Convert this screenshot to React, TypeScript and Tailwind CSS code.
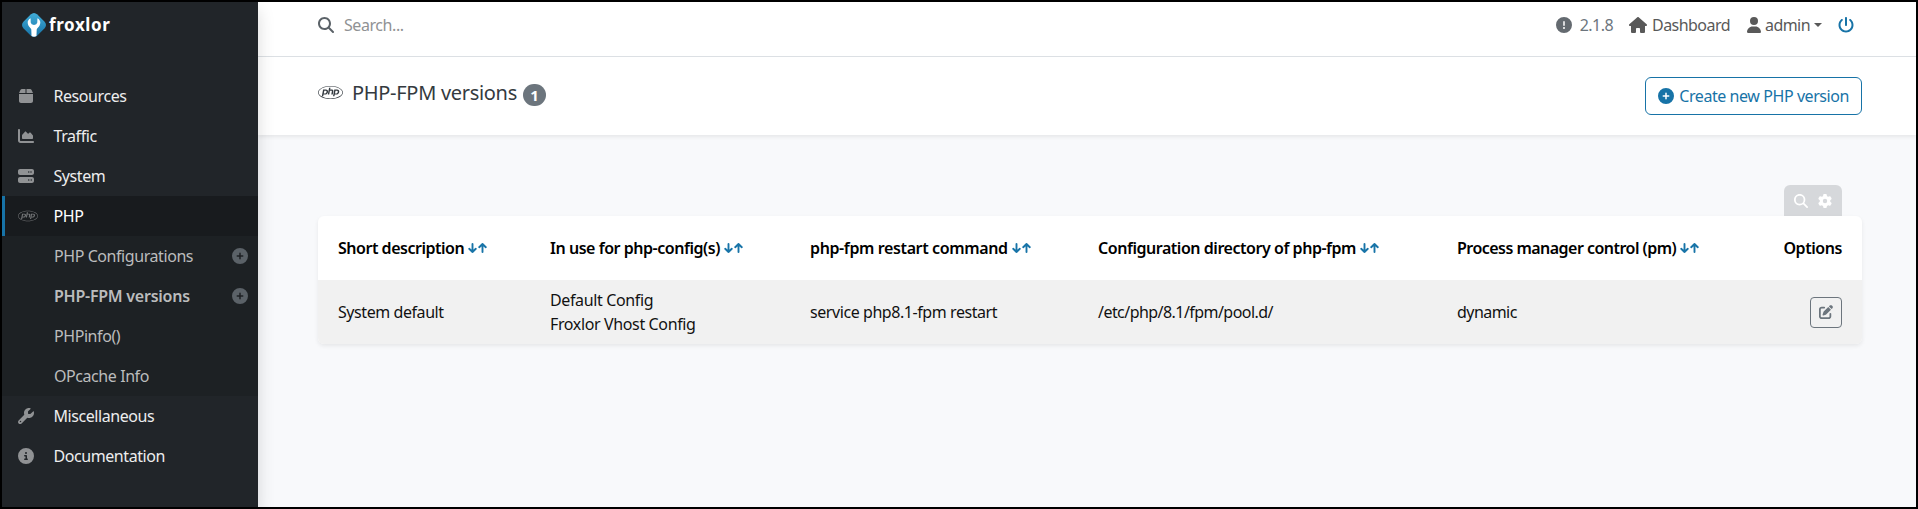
import React from "react";
import {
  FaBox,
  FaChartArea,
  FaServer,
  FaPhp,
  FaWrench,
  FaCircleInfo,
  FaCirclePlus,
  FaMagnifyingGlass,
  FaCircleExclamation,
  FaHouse,
  FaUser,
  FaPowerOff,
  FaGear,
  FaPenToSquare,
} from "react-icons/fa6";

const navTop = [
  { label: "Resources", icon: <FaBox size={16} /> },
  { label: "Traffic", icon: <FaChartArea size={16} /> },
  { label: "System", icon: <FaServer size={16} /> },
];

const subItems = [
  { label: "PHP Configurations", add: true, active: false },
  { label: "PHP-FPM versions", add: true, active: true },
  { label: "PHPinfo()", add: false, active: false },
  { label: "OPcache Info", add: false, active: false },
];

const navBottom = [
  { label: "Miscellaneous", icon: <FaWrench size={16} /> },
  { label: "Documentation", icon: <FaCircleInfo size={16} /> },
];

function NavItem({ label, icon }: { label: string; icon: React.ReactNode }) {
  return (
    <a className="flex h-10 items-center pl-4 text-[#ededee]">
      <span className="flex w-[35.5px] text-[#909294]">{icon}</span>
      <span>{label}</span>
    </a>
  );
}

function Logo() {
  return (
    <div className="flex h-[74px] items-start pt-[11px] pl-5">
      <svg width="24" height="24" viewBox="0 0 24 24">
        <defs>
          <linearGradient id="mark" x1="0" y1="0" x2="0" y2="1">
            <stop offset="0" stopColor="#41add8" />
            <stop offset="1" stopColor="#1672a6" />
          </linearGradient>
        </defs>
        <path
          d="M8.6 1.6Q12-1.6 15.4 1.6L22.4 8.6Q25.6 12 22.4 15.4L15.4 22.4Q12 25.6 8.6 22.4L1.6 15.4Q-1.6 12 1.6 8.6Z"
          fill="url(#mark)"
        />
        <path
          d="M8.6 5.2C5.8 6.6 5 9.4 6.3 12.2C7 13.8 9 15 9.3 16.4L9.5 23Q12 24.6 14.5 23L14.7 16.4C15 15 17 13.8 17.7 12.2C19 9.4 18.2 6.6 15.4 5.2L15.3 9.6Q14.9 12 12 12T8.7 9.6Z"
          fill="#fff"
        />
      </svg>
      <span className="ml-[3px] text-[17px] leading-[23px] font-bold tracking-[0.6px] text-white">froxlor</span>
    </div>
  );
}

function Sort() {
  return (
    <span className="ml-1 inline-flex gap-[1px] text-[#1874a8]">
      <svg width="9" height="10" viewBox="0 0 9 10" fill="none" stroke="currentColor" strokeWidth="1.9" strokeLinecap="round" strokeLinejoin="round">
        <path d="M4.5 1V9M1.2 5.8L4.5 9L7.8 5.8" />
      </svg>
      <svg width="9" height="10" viewBox="0 0 9 10" fill="none" stroke="currentColor" strokeWidth="1.9" strokeLinecap="round" strokeLinejoin="round">
        <path d="M4.5 9V1M1.2 4.2L4.5 1L7.8 4.2" />
      </svg>
    </span>
  );
}

const columns = [
  { label: "Short description", tracking: "tracking-[-0.48px]" },
  { label: "In use for php-config(s)", tracking: "tracking-[-0.46px]" },
  { label: "php-fpm restart command", tracking: "tracking-[-0.38px]" },
  { label: "Configuration directory of php-fpm", tracking: "tracking-[-0.46px]" },
  { label: "Process manager control (pm)", tracking: "tracking-[-0.53px]" },
];

export default function App() {
  return (
    <div className="flex h-[509px] w-[1918px] overflow-hidden border-2 border-black bg-[#f8f9fb] font-['Noto_Sans',sans-serif] text-[16px] leading-6 tracking-[-0.43px] text-[#212529]">
      <aside className="z-10 w-64 shrink-0 bg-[#212529] shadow-[0_8px_16px_rgba(0,0,0,0.15)]">
        <Logo />
        <nav>
          {navTop.map((n) => (
            <NavItem key={n.label} {...n} />
          ))}
          <a className="flex h-10 items-center border-l-[3px] border-[#1773a7] bg-[#181b1e] pl-[13px] text-white">
            <span className="flex w-[35.5px] text-[#747678]">
              <FaPhp size={20} />
            </span>
            <span>PHP</span>
          </a>
          <div className="bg-[#1d2124]">
            {subItems.map((s) => (
              <a key={s.label} className="flex h-10 items-center justify-between pr-[10px] pl-[52px] text-[#bbbcbd]">
                <span className={s.active ? "font-semibold tracking-[-0.25px]" : ""}>{s.label}</span>
                {s.add && <FaCirclePlus size={16} className="text-[#5b6268]" />}
              </a>
            ))}
          </div>
          {navBottom.map((n) => (
            <NavItem key={n.label} {...n} />
          ))}
        </nav>
      </aside>
      <main className="min-w-0 flex-1">
        <header className="flex h-[55px] items-start justify-between border-b border-[#dee2e6] bg-white pt-[11px] pr-[54px] pl-[60px]">
          <div className="flex items-center text-[#909294]">
            <FaMagnifyingGlass size={16} className="mr-[10px] text-[#5b6268]" />
            <span>Search...</span>
          </div>
          <div className="flex items-center tracking-[-0.55px] text-[#595959]">
            <FaCircleExclamation size={16} className="mr-2 text-[#646a70]" />
            <span className="mr-4 text-[#6c757d]">2.1.8</span>
            <FaHouse size={18} className="mr-[5px]" />
            <span className="mr-4">Dashboard</span>
            <FaUser size={16} className="mr-[3px]" />
            <span>admin</span>
            <span className="mr-4 ml-[4px] border-x-4 border-t-4 border-x-transparent border-t-[#595959]" />
            <FaPowerOff size={16} className="mr-2 text-[#1773a7]" />
          </div>
        </header>
        <section className="relative flex h-[78px] items-center justify-between bg-white pr-[54px] pl-[60px] shadow-[0_2px_4px_rgba(0,0,0,0.075)]">
          <h1 className="-mt-[6px] flex items-center text-[20px] tracking-[-0.3px] text-[#343a40]">
            <FaPhp size={25} className="mr-[9px] mb-[2px]" />
            <span>PHP-FPM versions</span>
            <span className="mt-[3px] ml-[6px] flex h-[22px] w-[23px] items-center justify-center rounded-full bg-[#6c757d] text-[15px] font-bold text-white">1</span>
          </h1>
          <button className="flex h-[38px] items-center rounded-md border border-[#1773a7] px-3 tracking-[-0.43px] text-[#1773a7]">
            <FaCirclePlus size={16} className="mr-[5px]" />
            <span>Create new PHP version</span>
          </button>
        </section>
        <section className="pt-[50px] pr-[54px] pl-[60px]">
          <div className="mr-5 ml-auto flex h-[31px] w-[58px] items-center justify-center gap-[10px] rounded-t-md bg-[#d6d8db] text-white">
            <FaMagnifyingGlass size={14} />
            <FaGear size={14} />
          </div>
          <div className="overflow-hidden rounded-md bg-white text-black shadow-[0_2px_4px_rgba(0,0,0,0.075)]">
            <div className="grid h-16 grid-cols-[212px_260px_288px_359px_1fr_auto] items-center px-5 font-semibold">
              {columns.map((c) => (
                <div key={c.label} className="flex items-center whitespace-nowrap">
                  <span className={c.tracking}>{c.label}</span>
                  <Sort />
                </div>
              ))}
              <div>Options</div>
            </div>
            <div className="grid h-16 grid-cols-[212px_260px_288px_359px_1fr_auto] items-center bg-[#f1f1f1] px-5 text-[#111111]">
              <div>System default</div>
              <div className="tracking-[-0.37px]">
                Default Config
                <br />
                Froxlor Vhost Config
              </div>
              <div>service php8.1-fpm restart</div>
              <div className="tracking-[-0.55px]">/etc/php/8.1/fpm/pool.d/</div>
              <div className="tracking-[-0.55px]">dynamic</div>
              <button className="flex h-[31px] w-8 items-center justify-center rounded border border-[#6c757d] text-[#6c757d]">
                <FaPenToSquare size={14} />
              </button>
            </div>
          </div>
        </section>
      </main>
    </div>
  );
}
